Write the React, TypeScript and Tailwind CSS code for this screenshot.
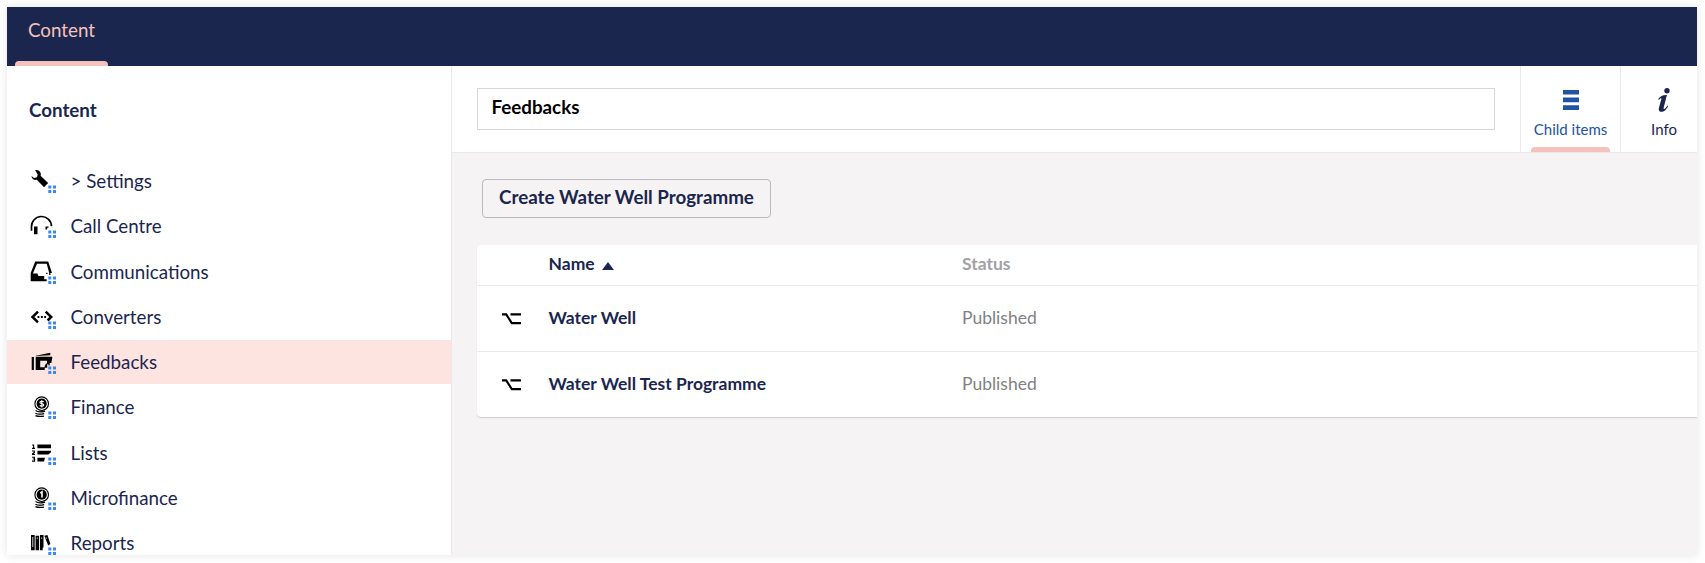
import type { ReactNode } from "react";

const Coin = ({ children }: { children: ReactNode }) => (
  <>
    <circle cx="12.7" cy="10.700" r="6.800" fill="none" stroke="#000" strokeWidth="1.100" />
    <circle cx="12.7" cy="10.700" r="5.100" />
    {children}
    <path d="M6.600 17.400c2 2 6 1.700 9.500.7M6.400 20.200c2.500 1.500 5.500 1.200 8.800.4M6.500 22.600c2.500 1.200 5 1 8.500.6" fill="none" stroke="#000" strokeWidth="1.300" />
  </>
);

const icons: Record<string, ReactNode> = {
  wrench: (
    <path d="M6.100 3.100c2.600-.8 5.400.8 5.700 3.600.1.8 0 1.400-.2 2l7.500 7.200-4 4.400-7.300-7.500c-2.600.6-5.100-1.100-5.300-3.900l2.500 2.100 3-.7.7-2.700z" />
  ),
  headset: (
    <>
      <path d="M2.500 18.700v-3.800a10 10 0 0 1 20-.8" fill="none" stroke="#000" strokeWidth="1.700" />
      <path d="M5 14.400h3.500v7.800H5zM16.500 14.400h3v1.400h-1.300v1.600h-1.700z" />
    </>
  ),
  inbox: (
    <>
      <path fillRule="evenodd" d="M6.200 3.500h13l3.800 11.400h-1.600v2h-1.200l-.1-2.400L17.700 5.700H8L3.900 15.400h4.500l1.100 2.500h5.700v3.300h2.500v2H1.700v-8.300z" />
      <path d="M17.200 14.700h1.300V16h-1.300z" />
    </>
  ),
  code: (
    <>
      <path d="M9 8.700 3.500 14 9 19.300M16.700 8.700 22.200 14l-3.600 3.500" fill="none" stroke="#000" strokeWidth="2.500" />
      <path d="M8.500 13h1.900v2H8.500zM11.900 13h1.900v2h-1.900zM15.200 13h1.900v2h-1.900z" />
    </>
  ),
  tickets: (
    <>
      <path d="M2.700 9h2.200v13H2.700zM6.700 7.700l14.600-3v2.600L6.700 7.900z" />
      <path fillRule="evenodd" d="M6.700 8.800h16.600v1l-1 5.200h-1.600v2.500h-1.200v-1.300h-1.300v3.500h-2.500V22h-9zM11.200 12.700v6.600h4.300l.5-2.400 2-2v-2.200z" />
    </>
  ),
  dollar: (
    <Coin>
      <path d="M14.700 8.800c-.8-.8-3.800-.8-3.800.6 0 1.500 3.800.9 3.800 2.500 0 1.500-3 1.500-4 .6M12.800 7v7.400" fill="none" stroke="#fff" strokeWidth="1.100" />
    </Coin>
  ),
  list: (
    <>
      <path d="M8.400 5.500H22v3.800H8.400zM8.400 11.800H22v1.500l-2.600 2.200h-11zM8.400 18.700H16l-1 3.800H8.400z" />
      <path d="M3.300 6.100h1.300v3.600M3 9.400h3M3 12h2.300v1.500L3.500 14.800v.6H6M3 18.300h2.400V20H3.800h1.800v2.100H3" fill="none" stroke="#000" strokeWidth="1.100" />
    </>
  ),
  one: (
    <Coin>
      <path d="m11.300 9.100 1.700-1.200v5.700" fill="none" stroke="#fff" strokeWidth="1.600" />
    </Coin>
  ),
  books: (
    <>
      <path d="M2 6h3.700v15.300H2zM6.600 6.700H10v14.600H6.600zM10.900 6h3.600v12.500h-.8v2.800h-2.800zM15.300 6.700 18.400 6l3 9-2.200 1.400z" />
      <path d="M3.800 8v10M8.300 8.500v1.300M12.700 8.500v1.300M17 8.300l.5 1.300" fill="none" stroke="#fff" strokeWidth=".8" />
    </>
  ),
};

const items = [
  { label: "> Settings", icon: "wrench" },
  { label: "Call Centre", icon: "headset" },
  { label: "Communications", icon: "inbox" },
  { label: "Converters", icon: "code" },
  { label: "Feedbacks", icon: "tickets", active: true },
  { label: "Finance", icon: "dollar" },
  { label: "Lists", icon: "list" },
  { label: "Microfinance", icon: "one" },
  { label: "Reports", icon: "books" },
];

const rows = ["Water Well", "Water Well Test Programme"];

const TreeIcon = ({ name }: { name: string }) => (
  <svg className="size-7 shrink-0" viewBox="0 0 28 28">
    {icons[name]}
    <path fill="#3d86f5" d="M19.300 18.500h3v3h-3zM24 18.500h3v3h-3zM19.300 23h3v3h-3zM24 23h3v3h-3z" />
  </svg>
);

export default function App() {
  return (
    <div className="h-[563px] w-full overflow-hidden bg-white p-[7px] pr-2 pb-2 font-['Lato',sans-serif] text-[18.75px] text-[#1b264f]">
      <div className="flex h-[548px] flex-col overflow-hidden bg-white shadow-[0_0_9px_rgba(0,0,0,0.11)]">
        <header className="flex h-[59px] shrink-0 bg-[#1b264f] pl-2">
          <div className="flex w-[93px] flex-col items-center justify-between text-[#f5c1bc]">
            <span className="pt-[9px] leading-7">Content</span>
            <span className="h-[5px] w-full rounded-t-[4px] bg-[#f5c1bc]" />
          </div>
        </header>
        <div className="flex min-h-0 flex-1">
          <aside className="w-[445px] shrink-0 overflow-hidden border-r border-[#e9e9eb]">
            <h2 className="pt-[30px] pl-[22px] leading-7 font-bold">Content</h2>
            <ul className="pt-[35px]">
              {items.map((item) => (
                <li key={item.label} className="h-[45.25px]">
                  <div className={`flex h-11 items-center gap-[13.5px] pl-[22px] ${item.active ? "bg-[#fee4e1]" : ""}`}>
                    <TreeIcon name={item.icon} />
                    <span className="leading-7">{item.label}</span>
                  </div>
                </li>
              ))}
            </ul>
          </aside>
          <main className="flex min-w-0 flex-1 flex-col overflow-hidden bg-[#f5f3f4]">
            <div className="flex h-[87px] shrink-0 border-b border-[#e9e9eb] bg-white">
              <div className="flex-1 pt-[22px] pr-[25px] pl-[25px]">
                <div className="h-[42px] border border-[#d8d7d9] pt-1 pl-[13.5px] leading-7 font-bold text-black">Feedbacks</div>
              </div>
              <div className="flex w-[100px] flex-col items-center border-l border-[#e9e9eb] text-[15px] text-[#2152a3]">
                <svg className="mt-6 h-5 w-4 shrink-0" viewBox="0 0 16 20">
                  <path fill="#2152a3" d="M0 0h16v4.600H0zM0 7.500h16v4.800H0zM0 15.300h16V20H0z" />
                </svg>
                <span className="mt-[9px] leading-5 whitespace-nowrap">Child items</span>
                <span className="mt-2 h-[5px] w-[79px] rounded-t-[4px] bg-[#f5c1bc]" />
              </div>
              <div className="w-[77px] border-l border-[#e9e9eb] text-[15px]">
                <div className="flex w-[86px] flex-col items-center">
                  <svg className="mt-[22px] h-6 w-3 shrink-0" viewBox="0 0 12 24">
                    <circle cx="9" cy="2.800" r="2.700" fill="#1b264f" />
                    <path fill="#1b264f" d="M.2 11.300C2 8.200 5 6.800 8.900 7L5.700 19.600c-.4 1.500.2 1.700 1 1.100.9-.6 1.900-1.900 2.700-3.200l.8.400c-2.100 4-4.100 5.900-6.600 5.900-2.400 0-3.300-1.500-2.700-3.900l2.400-8.700c.4-1.500-1-.9-2.400.7z" />
                  </svg>
                  <span className="mt-[7px] leading-5">Info</span>
                </div>
              </div>
            </div>
            <div className="pt-[26px] pl-[30px]">
              <button className="flex h-[39px] w-[289px] justify-center rounded-[4px] border border-[#bbbabf] pt-[3px] leading-7 font-bold">
                Create Water Well Programme
              </button>
            </div>
            <div className="mt-[27px] ml-[25px] rounded-l-[4px] bg-white text-[17.5px] shadow-[0_1px_1px_rgba(0,0,0,0.16)]">
              <div className="flex h-10 pt-[5px] pl-[71.5px] leading-7 font-bold">
                <div className="flex w-[413.5px] items-center gap-[7px] self-start">
                  Name
                  <svg className="mt-[3px] h-2 w-3" viewBox="0 0 12 8">
                    <path fill="#1b264f" d="M6 0l6 8H0z" />
                  </svg>
                </div>
                <div className="text-[#a2a1a6]">Status</div>
              </div>
              {rows.map((row) => (
                <div key={row} className="flex h-[66px] items-center border-t border-[#e9e9eb] pl-[25px]">
                  <svg className="h-3 w-[19px]" viewBox="0 0 19 12">
                    <path d="M0 1.400h4.200l5.600 8.700H19M8.500 1.400H19" fill="none" stroke="#000" strokeWidth="2.100" />
                  </svg>
                  <span className="-mt-px ml-[27.5px] w-[413.5px] leading-7 font-bold">{row}</span>
                  <span className="-mt-px leading-7 text-[#817f85]">Published</span>
                </div>
              ))}
            </div>
          </main>
        </div>
      </div>
    </div>
  );
}
